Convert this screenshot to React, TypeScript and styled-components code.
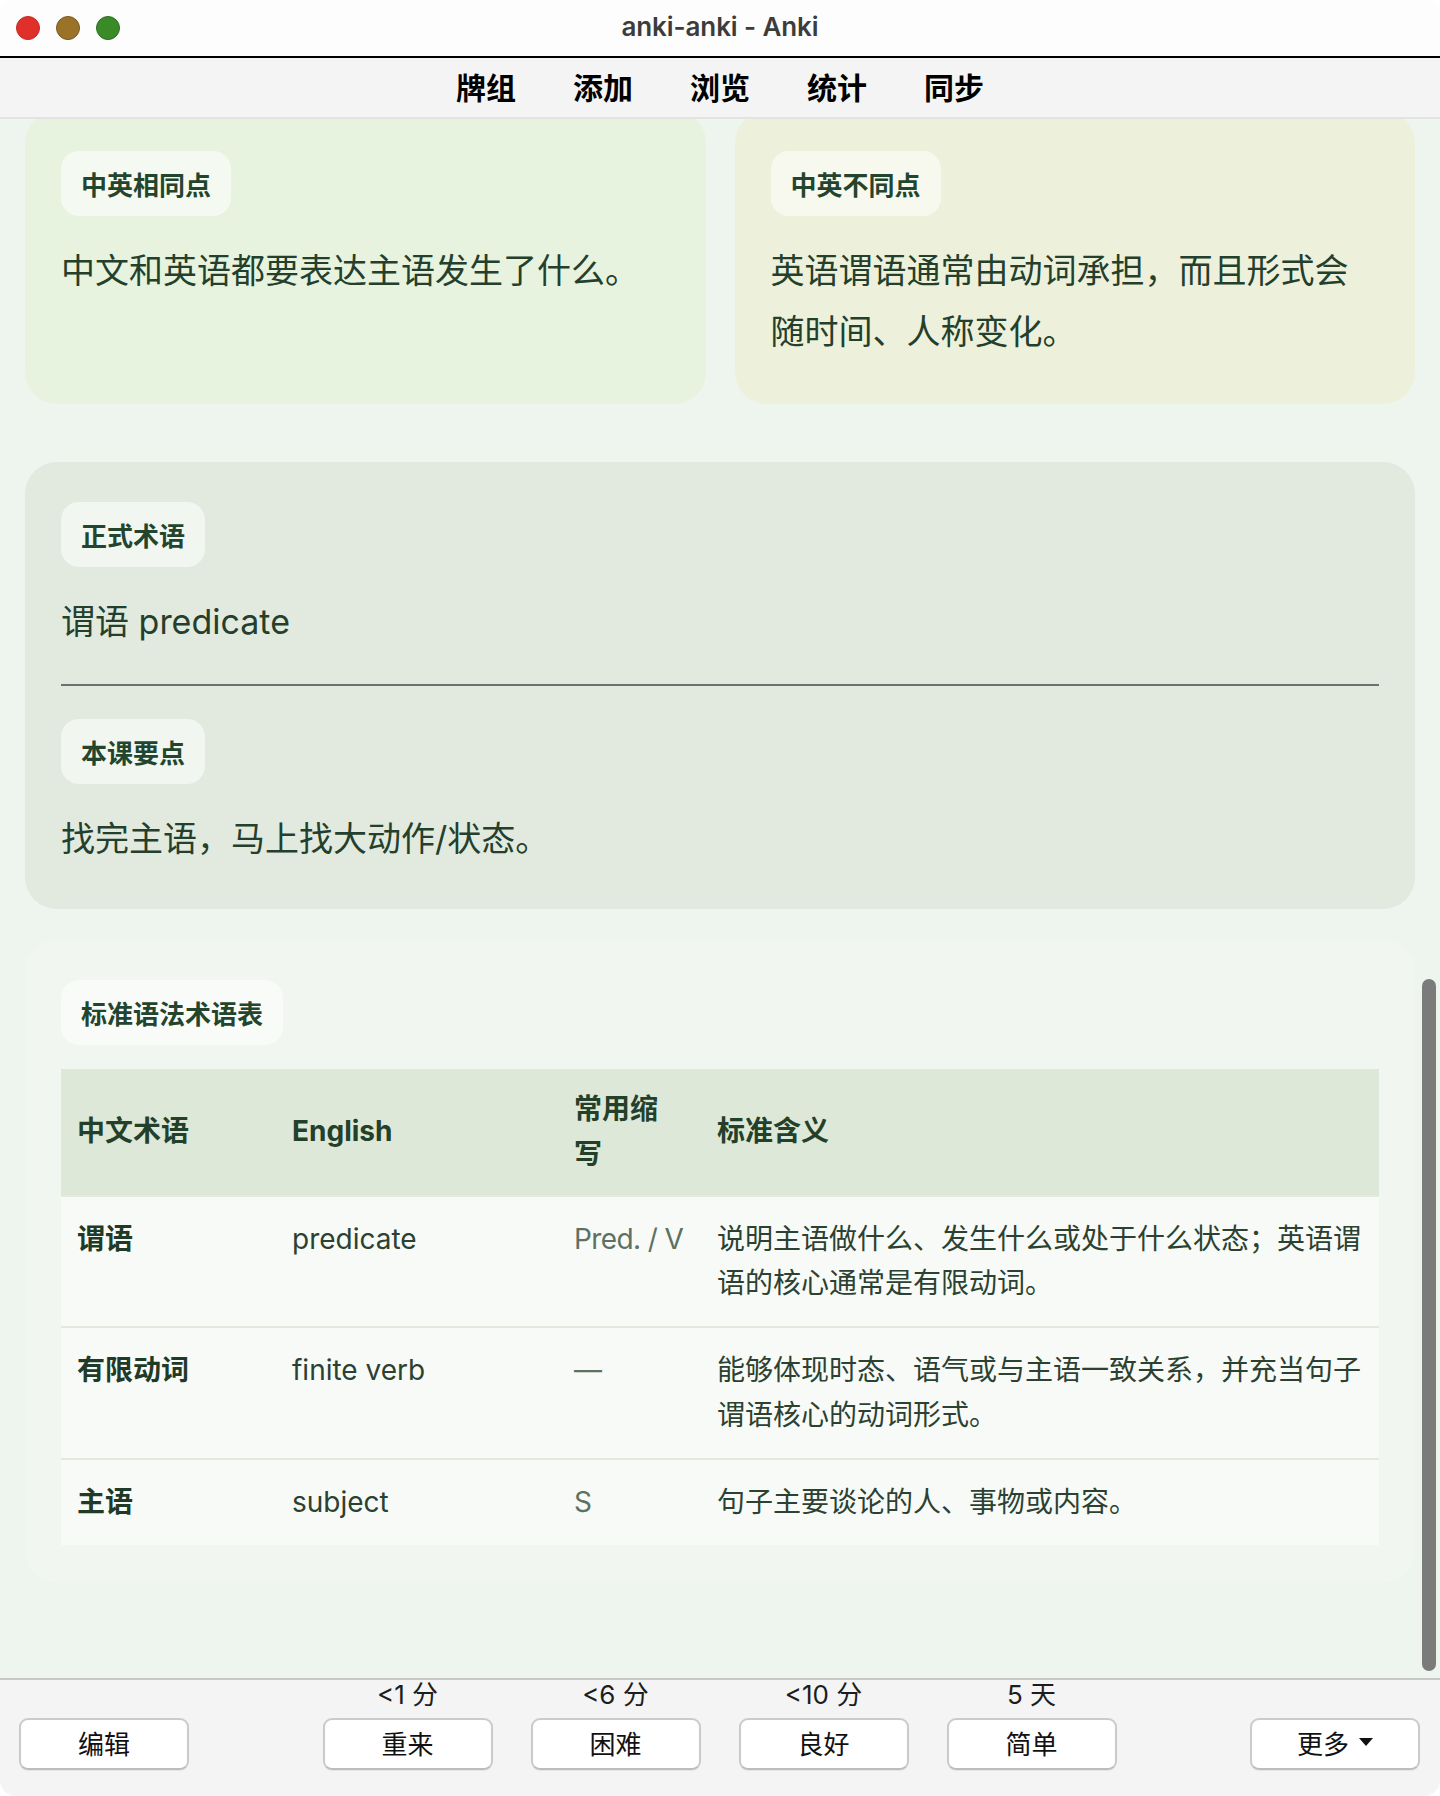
import React from "react";
import styled, { createGlobalStyle } from "styled-components";

const GlobalStyle = createGlobalStyle`
  html, body {
    margin: 0;
    padding: 0;
    background: #ffffff;
  }
  body {
    font-family: "Inter", "Noto Sans CJK SC", sans-serif;
  }
`;

const SANS = `"Inter", "Noto Sans CJK SC", sans-serif`;
const CJK = `"Noto Sans CJK SC", sans-serif`;

const Window = styled.div`
  width: 1440px;
  height: 1796px;
  display: flex;
  flex-direction: column;
  border-radius: 16px;
  overflow: hidden;
  background: #f4f4f4;
`;

/* ---------- title bar ---------- */

const TitleBar = styled.header`
  height: 58px;
  flex: none;
  box-sizing: border-box;
  padding-bottom: 4px;
  display: grid;
  grid-template-columns: 1fr auto 1fr;
  align-items: center;
  background: #fdfdfd;
  border-bottom: 2px solid #000;
`;

const Lights = styled.div`
  display: flex;
  gap: 16px;
  padding-left: 16px;
  margin-top: 4px;
`;

const Light = styled.span<{ $fill: string; $ring: string }>`
  width: 24px;
  height: 24px;
  border-radius: 50%;
  box-sizing: border-box;
  background: ${(p) => p.$fill};
  border: 1px solid ${(p) => p.$ring};
`;

const Title = styled.h1`
  margin: 0;
  font: 600 26px ${SANS};
  color: #3c3c3c;
  letter-spacing: -0.1px;
`;

/* ---------- top toolbar ---------- */

const Toolbar = styled.nav`
  height: 61px;
  flex: none;
  box-sizing: border-box;
  padding-bottom: 4px;
  display: flex;
  align-items: center;
  justify-content: center;
  gap: 57px;
  background: #f4f4f4;
  border-bottom: 2px solid #e3e3e3;
`;

const ToolLink = styled.a`
  font: 700 30px/36px ${CJK};
  color: #000;
  text-decoration: none;
`;

/* ---------- review area ---------- */

const Content = styled.main`
  flex: 1;
  position: relative;
  overflow: hidden;
  background: #eef4ee;
  padding: 0 25px;
`;

const Scrolled = styled.div`
  margin-top: -8px;
  display: flex;
  flex-direction: column;
`;

const CompareRow = styled.div`
  display: grid;
  grid-template-columns: 1fr 1fr;
  gap: 29px;
  margin-bottom: 58px;
`;

const Card = styled.section<{ $bg: string; $bottom?: number }>`
  background: ${(p) => p.$bg};
  border-radius: 32px;
  padding: 40px 36px ${(p) => p.$bottom ?? 42}px;
`;

const Badge = styled.div`
  display: inline-block;
  padding: 13px 20px;
  border-radius: 18px;
  background: rgba(255, 255, 255, 0.55);
  font: 700 26px/39px ${CJK};
  color: #23452d;
`;

const Body = styled.p`
  margin: 24px 0 0;
  font: 400 34px/61px ${SANS};
  color: #243f2c;
`;

const Rule = styled.hr`
  margin: 32px 0 33px;
  border: none;
  height: 2px;
  background: #6e706d;
`;

const TermTable = styled.table`
  width: 100%;
  margin-top: 24px;
  border-collapse: collapse;
  table-layout: fixed;
  font: 400 28px/44.8px ${SANS};
`;

const Th = styled.th`
  padding: 18px 16px;
  text-align: left;
  vertical-align: middle;
  font-weight: 700;
  color: #23402b;
  background: #dde8d8;
`;

const Td = styled.td<{ $tone?: "strong" | "muted" | "plain" }>`
  padding: 20px 16px;
  vertical-align: top;
  background: #f8faf7;
  border-top: 2px solid #e2eadf;
  font-weight: ${(p) => (p.$tone === "strong" ? 700 : 400)};
  white-space: ${(p) => (p.$tone === "muted" ? "nowrap" : "normal")};
  letter-spacing: ${(p) => (p.$tone === "muted" ? "-0.6px" : "0")};
  color: ${(p) =>
    p.$tone === "muted" ? "#5d7163" : p.$tone === "strong" ? "#1f3a27" : "#2b4131"};
`;

const Thumb = styled.div`
  position: absolute;
  right: 4px;
  top: 860px;
  width: 14px;
  height: 692px;
  border-radius: 7px;
  background: #7b7b7b;
`;

/* ---------- answer bar ---------- */

const AnswerBar = styled.footer`
  height: 118px;
  flex: none;
  box-sizing: border-box;
  display: grid;
  grid-template-columns: 1fr auto 1fr;
  align-items: end;
  padding: 0 20px 27px 19px;
  background: #f4f4f4;
  border-top: 2px solid #c8c8c8;
`;

const Ease = styled.div`
  display: flex;
  gap: 38px;
`;

const EaseSlot = styled.div`
  display: flex;
  flex-direction: column;
  align-items: center;
  gap: 8px;
`;

const Due = styled.span`
  font: 400 26px/30px ${SANS};
  color: #1d1d1d;
`;

const Button = styled.button<{ $side?: "start" | "end" }>`
  justify-self: ${(p) => p.$side ?? "center"};
  width: 170px;
  height: 52px;
  box-sizing: border-box;
  display: inline-flex;
  align-items: center;
  justify-content: center;
  gap: 10px;
  padding: 0 0 4px;
  background: #fff;
  border: 2px solid #cbcbcb;
  border-bottom-color: #bdbdbd;
  border-radius: 9px;
  box-shadow: 0 1px 1px rgba(0, 0, 0, 0.06);
  font: 400 26px ${CJK};
  color: #111;
`;

const answers = [
  { due: "<1 分", label: "重来" },
  { due: "<6 分", label: "困难" },
  { due: "<10 分", label: "良好" },
  { due: "5 天", label: "简单" },
];

const terms = [
  {
    zh: "谓语",
    en: "predicate",
    abbr: "Pred. / V",
    meaning: "说明主语做什么、发生什么或处于什么状态；英语谓语的核心通常是有限动词。",
  },
  {
    zh: "有限动词",
    en: "finite verb",
    abbr: "—",
    meaning: "能够体现时态、语气或与主语一致关系，并充当句子谓语核心的动词形式。",
  },
  {
    zh: "主语",
    en: "subject",
    abbr: "S",
    meaning: "句子主要谈论的人、事物或内容。",
  },
];

export default function App() {
  return (
    <>
      <GlobalStyle />
      <Window>
        <TitleBar>
          <Lights>
            <Light $fill="#e0302a" $ring="#c22a22" />
            <Light $fill="#9b7328" $ring="#7a5620" />
            <Light $fill="#3a8a28" $ring="#2d6e1f" />
          </Lights>
          <Title>anki-anki - Anki</Title>
          <span />
        </TitleBar>

        <Toolbar>
          {["牌组", "添加", "浏览", "统计", "同步"].map((t) => (
            <ToolLink key={t} href="#">
              {t}
            </ToolLink>
          ))}
        </Toolbar>

        <Content>
          <Scrolled>
            <CompareRow>
              <Card $bg="#e7f3df">
                <Badge>中英相同点</Badge>
                <Body>中文和英语都要表达主语发生了什么。</Body>
              </Card>
              <Card $bg="#edf1dc">
                <Badge>中英不同点</Badge>
                <Body>英语谓语通常由动词承担，而且形式会随时间、人称变化。</Body>
              </Card>
            </CompareRow>

            <Card $bg="#e2eae0" $bottom={40} style={{ marginBottom: 31 }}>
              <Badge>正式术语</Badge>
              <Body>谓语 predicate</Body>
              <Rule />
              <Badge>本课要点</Badge>
              <Body>找完主语，马上找大动作/状态。</Body>
            </Card>

            <Card $bg="#f1f6f0" $bottom={38}>
              <Badge>标准语法术语表</Badge>
              <TermTable>
                <colgroup>
                  <col style={{ width: 215 }} />
                  <col style={{ width: 282 }} />
                  <col style={{ width: 143 }} />
                  <col />
                </colgroup>
                <thead>
                  <tr>
                    <Th>中文术语</Th>
                    <Th>English</Th>
                    <Th>常用缩写</Th>
                    <Th>标准含义</Th>
                  </tr>
                </thead>
                <tbody>
                  {terms.map((t) => (
                    <tr key={t.zh}>
                      <Td $tone="strong">{t.zh}</Td>
                      <Td>{t.en}</Td>
                      <Td $tone="muted">{t.abbr}</Td>
                      <Td>{t.meaning}</Td>
                    </tr>
                  ))}
                </tbody>
              </TermTable>
            </Card>
          </Scrolled>
          <Thumb />
        </Content>

        <AnswerBar>
          <Button $side="start">编辑</Button>
          <Ease>
            {answers.map((a) => (
              <EaseSlot key={a.label}>
                <Due>{a.due}</Due>
                <Button>{a.label}</Button>
              </EaseSlot>
            ))}
          </Ease>
          <Button $side="end">
            更多
            <svg width="14" height="8" viewBox="0 0 14 8">
              <polygon points="0,0 14,0 7,8" fill="#111" />
            </svg>
          </Button>
        </AnswerBar>
      </Window>
    </>
  );
}
